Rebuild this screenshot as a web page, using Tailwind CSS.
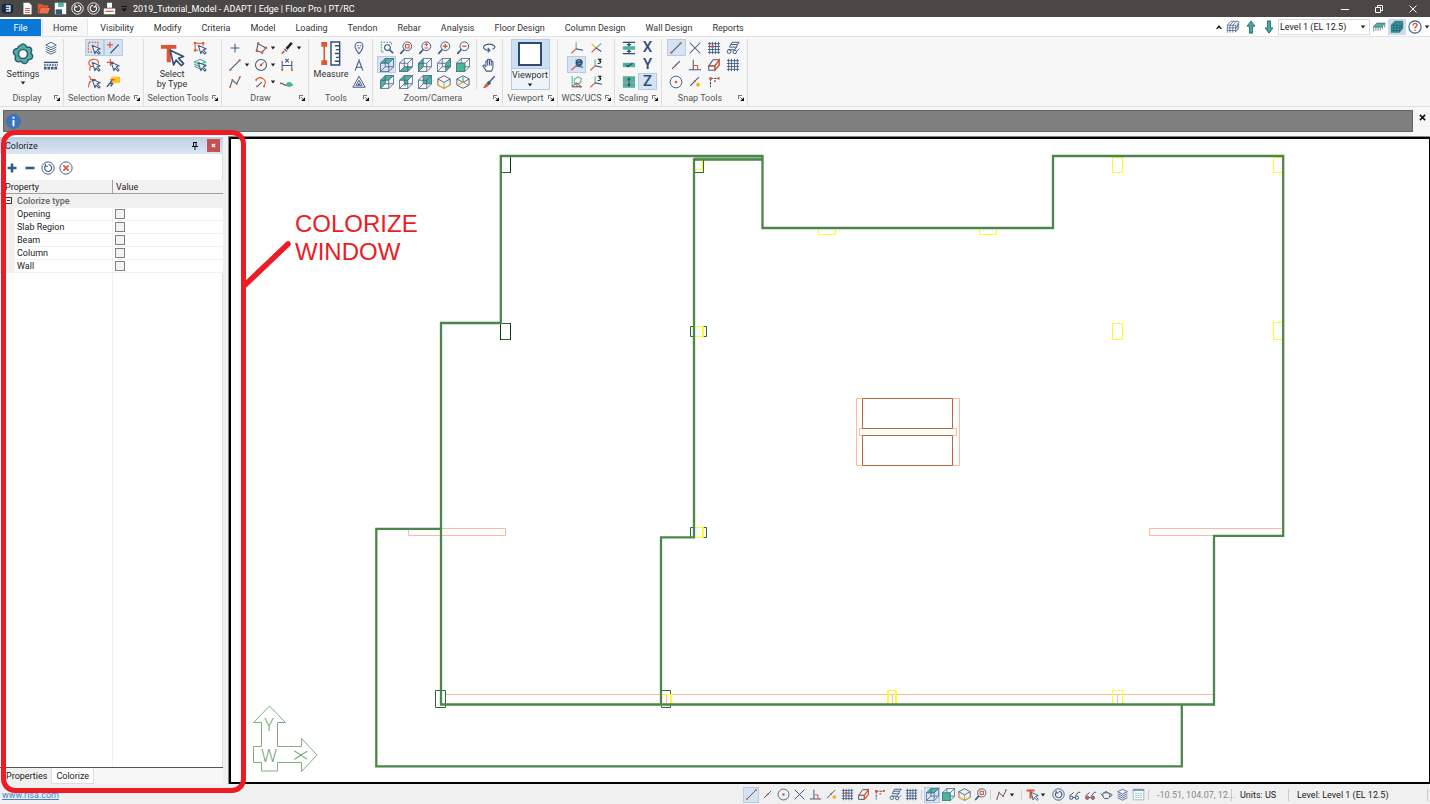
<!DOCTYPE html>
<html lang="en">
<head>
  <meta charset="UTF-8">
  <meta name="viewport" content="width=device-width, initial-scale=1.0">
  <title>2019_Tutorial_Model - ADAPT | Edge | Floor Pro | PT/RC</title>
  <script src="https://cdn.jsdelivr.net/npm/@tailwindcss/browser@4"></script>
</head>
<body class="flex h-screen flex-col overflow-hidden bg-[#f0f0f0] fill-none stroke-none font-[Roboto,'Noto_Sans',sans-serif] text-[9px] leading-3 text-[#333]">

  <!-- Icon set -->
  <svg class="hidden" aria-hidden="true">
    <symbol id="cube" viewBox="0 0 16 16"><path stroke="currentColor" stroke-width=".9" d="M.5 6H10v9.500H.5zM6 .5h9.500V10H6zM.5 6L6 .5M10 6l5.500-5.500M.5 15.500L6 10M10 15.500l5.500-5.500"/></symbol>
    <symbol id="cube-top" viewBox="0 0 16 16"><path fill="#4fb39c" d="M.5 6L6 .5h9.500L10 6z"/><use href="#cube"/></symbol>
    <symbol id="cube-bottom" viewBox="0 0 16 16"><path fill="#4fb39c" d="M.5 15.500L6 10h9.500L10 15.500z"/><use href="#cube"/></symbol>
    <symbol id="cube-left" viewBox="0 0 16 16"><path fill="#4fb39c" d="M.5 6L6 .5V10L.5 15.500z"/><use href="#cube"/></symbol>
    <symbol id="cube-right" viewBox="0 0 16 16"><path fill="#4fb39c" d="M10 6L15.500.5V10L10 15.500z"/><use href="#cube"/></symbol>
    <symbol id="cube-front" viewBox="0 0 16 16"><use href="#cube"/><path fill="#4fb39c" stroke="#2f7f78" stroke-width=".9" d="M.5 6H10v9.500H.5z"/></symbol>
    <symbol id="cube-tl" viewBox="0 0 16 16"><path fill="#4fb39c" d="M.5 6L6 .5h9.500L10 6H6v4L.5 15.500z"/><use href="#cube"/></symbol>
    <symbol id="cube-tr" viewBox="0 0 16 16"><path fill="#4fb39c" d="M.5 6L6 .5h9.500L10 6v4L6 13.500V6z"/><use href="#cube"/></symbol>
    <symbol id="cube-back" viewBox="0 0 16 16"><path fill="#4fb39c" d="M6 .5h9.500V10H6z"/><use href="#cube"/></symbol>
    <symbol id="iso" viewBox="0 0 16 16"><path stroke="currentColor" d="M8 .8l7 3.700v7L8 15.200 1 11.500v-7zM1 4.500l7 4 7-4"/><path stroke="#f0a93a" stroke-width="1.500" d="M1 7v4.500l7 3.700 7-3.700"/><path stroke="#4fb39c" d="M8 8.500v6.500"/></symbol>
    <symbol id="iso2" viewBox="0 0 16 16"><path stroke="currentColor" d="M8 .8l7 3.700v7L8 15.200 1 11.500v-7zM1 4.500l7 4 7-4"/><path stroke="#f0a93a" stroke-width="1.500" d="M8 8l-6 3.500"/><path stroke="#e0542f" d="M8 8l6 3.500"/><path stroke="#4fb39c" stroke-width="1.500" d="M8 2v6"/></symbol>

    <symbol id="cursor" viewBox="0 0 16 16"><path fill="#f7f7f7" stroke="currentColor" stroke-width="1.200" stroke-linejoin="round" d="M6 5l9 3.800-3.300 1.300 3.300 3.600-1.400 1.300-3.300-3.500L9 14.500z"/></symbol>
    <symbol id="gear" viewBox="0 0 24 24"><path fill="#4fb39c" stroke="#2f5c80" stroke-width="1.500" stroke-linejoin="round" d="M9.200 3.500Q12 .4 14.800 3.500L15.500 5.200 17.300 4.900Q21.300 5.200 20.500 9.200L19.800 11 21.100 12.400Q22.800 16.200 19 17.500L17.200 17.800 16.700 19.600Q14.300 23 11.200 20.600L10 19.200 8.100 19.700Q3.900 19.800 4.200 15.700L4.800 13.800 3.300 12.500Q1 9 4.500 6.900L6.500 6.500 7.400 4.700z"/><circle cx="12" cy="12" r="4.500" fill="#fff" stroke="#2f5c80" stroke-width="1.600"/></symbol>
    <symbol id="layers" viewBox="0 0 16 16"><path stroke="currentColor" d="M8 1.500l6 3-6 3-6-3zM2 7l6 3 6-3M2 9.500l6 3 6-3M2 12l6 3 6-3"/></symbol>
    <symbol id="linetype" viewBox="0 0 16 16"><path stroke="currentColor" stroke-width="1.600" d="M0 5h16"/><path stroke="currentColor" stroke-width="1.500" stroke-dasharray="2 1" d="M0 8h16"/><path stroke="currentColor" stroke-width="3" stroke-dasharray="3 1" d="M0 11.500h16"/></symbol>
    <symbol id="sel-box" viewBox="0 0 16 16"><path stroke="#e0542f" stroke-width="1.200" stroke-dasharray="2 1.200" d="M12.500 6V1.500h-11v11H6"/><use href="#cursor"/></symbol>
    <symbol id="sel-add" viewBox="0 0 16 16"><path stroke="#e0542f" stroke-width="1.300" d="M4.500 1v7M1 4.500h7"/><path stroke="currentColor" stroke-width="1.300" d="M5 14L14.500 4"/></symbol>
    <symbol id="sel-lasso" viewBox="0 0 16 16"><path stroke="#e0542f" stroke-width="1.300" d="M7 10C0 9 1 2 7 1.500S14 5 12.500 6.500M4 9.500c-2 2 0 4-1 5"/><use href="#cursor"/></symbol>
    <symbol id="sel-plus" viewBox="0 0 16 16"><path stroke="#e0542f" stroke-width="1.300" d="M5 1v8M1 5h8"/><use href="#cursor"/></symbol>
    <symbol id="sel-chain" viewBox="0 0 16 16"><path stroke="#e0542f" stroke-width="1.300" d="M2 1.500c4 1 0 3 3 4s3-2 5 0M5 7c-4 1-2 4-3.500 7"/><use href="#cursor"/></symbol>
    <symbol id="sel-flag" viewBox="0 0 16 16"><path fill="#ffc21f" d="M6 2h10v7H5.500z"/><path stroke="#e0542f" stroke-width="1.600" d="M5 5.500h5"/><path stroke="currentColor" stroke-width="1.600" d="M6.500 6.500l-2 3-3.500 4M4.500 9.500l3 .5-2 3"/></symbol>
    <symbol id="sel-type" viewBox="0 0 26 26"><path fill="#e0542f" d="M1 3h16v4h-5.800v14H7V7H1z"/><path fill="#f7f7f7" stroke="#2f4f78" stroke-width="1.700" stroke-linejoin="round" d="M10.500 8.500l14 6.500-5.300 1.800 5.300 5.700-2.300 2.200-5.400-5.800-2.600 5z"/></symbol>
    <symbol id="sel-rect" viewBox="0 0 16 16"><path stroke="#e0542f" stroke-width="1.200" d="M11.500 6V2.500h-9v8H6"/><path fill="#e0542f" d="M1 1h2.500v2.500H1zM10.500 1H13v2.500h-2.500zM1 9.500h2.500V12H1z"/><use href="#cursor"/></symbol>
    <symbol id="sel-layer" viewBox="0 0 16 16"><path stroke="#4fb39c" stroke-width="1.300" d="M8 1.500l6.500 3-6.500 3-6.500-3zM1.500 7L8 10l6.500-3M1.500 9.500l6.500 3"/><use href="#cursor"/></symbol>

    <symbol id="plus" viewBox="0 0 16 16"><path stroke="currentColor" stroke-width="1.200" d="M8 3v10M3 8h10"/></symbol>
    <symbol id="polygon" viewBox="0 0 16 16"><path stroke="currentColor" stroke-width="1.200" d="M4.500 3l9 5-4.500 5-6-2z"/><path fill="#e0542f" d="M3.500 1.500H6V4H3.500zM12.500 6.500H15V9h-2.500zM8 12h2.500v2.500H8zM2 10h2.500v2.500H2z"/></symbol>
    <symbol id="brush" viewBox="0 0 16 16"><path stroke="#222" stroke-width="3" d="M7.500 9l6-7"/><path stroke="#e0542f" stroke-width="2" d="M2 14.500l3-3"/><path stroke="currentColor" stroke-width="1.500" d="M5 9l3 3"/></symbol>
    <symbol id="line" viewBox="0 0 16 16"><path stroke="currentColor" stroke-width="1.200" d="M3 13L13 3"/><path fill="#e0542f" d="M1.500 12.200h2.300v2.300H1.500zM12.200 1.500h2.300v2.300h-2.300z"/></symbol>
    <symbol id="segment" viewBox="0 0 16 16"><path stroke="currentColor" stroke-width="1.200" d="M3.500 12.500l9-9"/><path stroke="#e0542f" stroke-width="1.700" d="M7 9l2-2"/></symbol>
    <symbol id="circle" viewBox="0 0 16 16"><circle cx="8" cy="8" r="6.300" stroke="currentColor" stroke-width="1.200"/><path stroke="#e0542f" stroke-width="1.200" d="M8 8l3-3"/><circle cx="8" cy="8" r="1.400" fill="#e0542f"/></symbol>
    <symbol id="dim" viewBox="0 0 16 16"><path stroke="currentColor" stroke-width="1.200" d="M2.500 3v11M13.500 3v11M3 8.500h10M6 1l4 4M10 1L6 5"/><path fill="#e0542f" d="M1.500 12.500h2v2h-2zM12.500 12.500h2v2h-2z"/></symbol>
    <symbol id="polyline" viewBox="0 0 16 16"><path stroke="currentColor" stroke-width="1.200" d="M2.500 13L5 6l5 4 3.500-7"/><path fill="#e0542f" d="M1.500 12.500h2v2h-2zM4 4.500h2v2H4zM9 9h2v2H9zM12.500 1.500h2v2h-2z"/></symbol>
    <symbol id="arc" viewBox="0 0 16 16"><path stroke="#e0542f" stroke-width="1.200" d="M2.500 5.500C7 0 16 5 11.500 13"/><path stroke="currentColor" stroke-width="1.200" d="M4 13l5-5"/><path fill="#e0542f" d="M1.500 4.500h2v2h-2zM10.500 12h2v2h-2zM2.500 12h2v2h-2z"/></symbol>
    <symbol id="support" viewBox="0 0 16 16"><path stroke="currentColor" stroke-width="1.200" d="M1 9.500c3 0 3 2.500 7 2.500s3-.5 7-.5"/><path fill="#4fb39c" d="M7 11.500a3.500 3.500 0 0 1 7 0c-1 3-6 3-7 0z"/><path fill="#e0542f" d="M0 8.500h2v2H0z"/></symbol>

    <symbol id="measure" viewBox="0 0 24 28"><path stroke="#e0542f" stroke-width="1.600" d="M5 4v20"/><path fill="#e0542f" d="M2 2h6v5H2zM2 21h6v5H2z"/><path fill="#fff" stroke="#2f4f78" stroke-width="1.500" d="M12 2h9v24h-9zM21 6h-5M21 10h-4M21 14h-5M21 18h-4M21 22h-5"/></symbol>
    <symbol id="pin" viewBox="0 0 16 16"><path stroke="currentColor" stroke-width="1.200" d="M8 14.500C5 11 3.500 8.500 3.500 6a4.500 4.500 0 0 1 9 0c0 2.500-1.500 5-4.500 8.500zM6 5.500h1.500M9 5.500h1.500M6.500 8h3"/></symbol>
    <symbol id="compass" viewBox="0 0 16 16"><path stroke="currentColor" stroke-width="1.200" d="M8 1v3M7.500 4L3.500 14.500M8.500 4l4 10.500M4.500 10.500h7"/></symbol>
    <symbol id="tri" viewBox="0 0 16 16"><path stroke="currentColor" stroke-width="1.100" d="M8 1.500L15 14H1zM8 6l3.500 6.200h-7z"/><path fill="currentColor" d="M8 8.500l1.500 3h-3z"/></symbol>

    <symbol id="zoom-win" viewBox="0 0 16 16"><path stroke="#3f9c86" stroke-width="1.200" stroke-dasharray="2 1.200" d="M13 4V1.500H1.500v11H5"/><circle cx="8.500" cy="7.500" r="3.300" fill="#f7f7f7" stroke="currentColor" stroke-width="1.200"/><path stroke="currentColor" stroke-width="2" d="M11 10l4 4"/></symbol>
    <symbol id="lens" viewBox="0 0 16 16"><circle cx="9.500" cy="6" r="5" stroke="currentColor" stroke-width="1.100"/><path stroke="currentColor" stroke-width="2" d="M6 9.700l-4.500 5"/></symbol>
    <symbol id="zoom-ext" viewBox="0 0 16 16"><use href="#lens"/><path stroke="#e0542f" stroke-width="1.300" d="M7.500 4h4v4h-4z"/></symbol>
    <symbol id="zoom-sel" viewBox="0 0 16 16"><use href="#lens"/><path stroke="#e0542f" stroke-width="1.300" d="M9.500 2v4M7.500 4h4M7.500 8h4"/></symbol>
    <symbol id="zoom-in" viewBox="0 0 16 16"><use href="#lens"/><path stroke="#e0542f" stroke-width="1.500" d="M9.500 3.500v5M7 6h5"/></symbol>
    <symbol id="zoom-out" viewBox="0 0 16 16"><use href="#lens"/><path stroke="#e0542f" stroke-width="1.500" d="M7 6h5"/></symbol>
    <symbol id="orbit" viewBox="0 0 16 16"><path stroke="currentColor" stroke-width="1.300" d="M12 9.500C18 7 13 3.500 8 3.500S-2 8 6 10.500h3M6.500 8L9 10.500 6.500 13"/></symbol>
    <symbol id="hand" viewBox="0 0 16 16"><path fill="#fff" stroke="currentColor" stroke-width="1.200" stroke-linejoin="round" d="M5 15l-4-6 1.500-1L4.500 10V3.500h2V8 1.500h2V8 2h2v6.500V4h2V11l-1.500 4z"/></symbol>
    <symbol id="paint" viewBox="0 0 16 16"><path stroke="currentColor" stroke-width="1.600" d="M14.500 1.500L8 8.500"/><path fill="currentColor" d="M7.500 6.500l3 3-3 2.500-2.500-2.500z"/><path fill="#e0542f" d="M5 9.500L7.500 12C5.500 14.500 3 15 1 15c2-2 2-4 4-5.500z"/></symbol>

    <symbol id="ucs" viewBox="0 0 16 16"><path stroke="#4fb39c" stroke-width="1.200" d="M7 9V1.500"/><path stroke="#e0542f" stroke-width="1.200" d="M7 9l-5.500 5"/><path stroke="currentColor" stroke-width="1.200" d="M7 9l8 1.500"/></symbol>
    <symbol id="ucs-x" viewBox="0 0 16 16"><path stroke="#e8b52f" stroke-width="1.300" d="M3 3l5 5"/><path stroke="#4fb39c" stroke-width="1.300" d="M14 3L8 8"/><path stroke="currentColor" stroke-width="1.200" d="M8 8l6 4"/><path stroke="#e0542f" stroke-width="1.300" d="M8 8l-5 5"/></symbol>
    <symbol id="ucs-globe" viewBox="0 0 16 16"><use href="#ucs"/><circle cx="10.500" cy="5" r="4" fill="#2f4f78"/><path stroke="#bcd" d="M8.500 4c1-2 2 0 3-1M9 7c1-1 2 0 3-1"/></symbol>
    <symbol id="ucs-3" viewBox="0 0 16 16"><use href="#ucs"/><path stroke="#111" stroke-width="1.200" d="M10 1.500h3.500L12 3.500c2.500 0 2 3-2 2.700"/></symbol>
    <symbol id="ucs-free" viewBox="0 0 16 16"><path stroke="#4fb39c" stroke-width="1.200" d="M2.500 13V1M5 9V5l4-3 4 2-1 5-4 1zM5 9l4 4"/><path stroke="#e0542f" stroke-width="1.200" d="M2.500 13l5-4 6 5"/><path stroke="currentColor" stroke-width="1.200" d="M2 13.500h11"/></symbol>

    <symbol id="sc-1" viewBox="0 0 16 16"><path stroke="currentColor" stroke-width="1.500" d="M1 1.500h14M1 14.500h14M8 2v12"/><path fill="#4fb39c" d="M1 6h14v4H1z"/><path fill="currentColor" d="M8 6L5 3.500h6zM8 10l3 2.500H5z"/></symbol>
    <symbol id="sc-2" viewBox="0 0 16 16"><path fill="#4fb39c" d="M1 5.500h14v5H1z"/><path stroke="#2f4f78" stroke-width="1.500" d="M5 8l2 1.800 5-4"/></symbol>
    <symbol id="sc-3" viewBox="0 0 16 16"><path fill="#4fb39c" d="M1 1.500h14v5.500H1zM1 9h14v5.500H1z"/><path stroke="#2f4f78" stroke-width="1.200" d="M1 8h14M8 3v10M6.500 5L8 3.500 9.500 5M6.500 11L8 12.500 9.500 11"/></symbol>

    <symbol id="cross" viewBox="0 0 16 16"><path stroke="currentColor" stroke-width="1.200" d="M2 2l12 12M14 2L2 14"/></symbol>
    <symbol id="grid" viewBox="0 0 16 16"><path stroke="currentColor" d="M3 1v14M6.300 1v14M9.700 1v14M13 1v14M1 3h14M1 6.300h14M1 9.700h14M1 13h14"/></symbol>
    <symbol id="grid-snap" viewBox="0 0 16 16"><use href="#grid"/><path fill="#e0542f" d="M5 5h2.800v2.800H5z"/></symbol>
    <symbol id="hatch" viewBox="0 0 16 16"><path stroke="currentColor" stroke-width="1.100" d="M7 1.500h8l-2 2.500H5.500zM5.500 4L4 7h8l1-3M12 7l-2 3H3"/><circle cx="3.500" cy="12" r="2.200" stroke="currentColor" stroke-width="1.100"/><circle cx="10" cy="12.500" r="2" stroke="currentColor" stroke-width="1.100"/><path stroke="currentColor" d="M12 12l3-3"/></symbol>
    <symbol id="perp" viewBox="0 0 16 16"><path stroke="currentColor" stroke-width="1.200" d="M1 13.500h14M6 2v11.500"/><path stroke="#e0542f" stroke-width="1.200" d="M6.500 8.500h4.500v5"/></symbol>
    <symbol id="snap-face" viewBox="0 0 16 16"><path stroke="currentColor" stroke-width="1.200" d="M2 9l5-7h7l-5 7zM2 9v5h7V9M9 14l5-6V2"/><path stroke="#e0542f" stroke-width="1.300" d="M9 14V9l5-7v6zM2 9h7"/></symbol>
    <symbol id="target" viewBox="0 0 16 16"><circle cx="8" cy="8" r="6.700" stroke="currentColor" stroke-width="1.100"/><circle cx="8" cy="8" r="1.500" fill="#e0542f"/></symbol>
    <symbol id="near" viewBox="0 0 16 16"><path stroke="currentColor" stroke-width="1.200" d="M2.500 12.500l10-10"/><path fill="#e0542f" d="M6 7l2.500-1.500v3z"/><path stroke="#f5b11f" stroke-width="2" d="M11.500 8.500v5M9 11h5"/></symbol>
    <symbol id="ortho" viewBox="0 0 16 16"><path stroke="currentColor" stroke-width="1.200" stroke-dasharray="3 1" d="M4 4h9M4 4v10"/><path fill="#e0542f" d="M2.500 2.500h3v3h-3zM12 2.500h2.500v2.500H12zM8 6h2v2H8z"/></symbol>

    <symbol id="building" viewBox="0 0 16 16"><path stroke="currentColor" stroke-width=".8" d="M1.500 6l4-4.500h9v8L11 13.500M1.500 6v8.500M1.500 6H11v8M4.500 6v8.500M7.800 6v8.500M1.500 9H11l3.500-4M1.500 12H11M4.500 6l4-4.500M7.800 6l4-4.500M12.800 3.500v8"/></symbol>
    <symbol id="building-on" viewBox="0 0 16 16"><path fill="#2fa190" d="M1.500 6l4-4.500h9v8L11 14.500H1.500z"/><use href="#building"/></symbol>
    <symbol id="slab" viewBox="0 0 16 16"><path fill="#4fb39c" stroke="#2f6f78" stroke-width=".8" d="M1.500 8l4-4.500H15L11 8z"/><path stroke="currentColor" stroke-width=".8" d="M2 8v5M4.500 8v4M7 8v4M9.500 8v4M12 7v3M14.500 4.500v4"/></symbol>
    <symbol id="up" viewBox="0 0 16 16"><path fill="#3fae93" stroke="#2f5c80" stroke-linejoin="round" d="M8 1l4.500 6H9.800v8H6.200V7H3.500z"/></symbol>
    <symbol id="down" viewBox="0 0 16 16"><path fill="#3fae93" stroke="#2f5c80" stroke-linejoin="round" d="M8 15L3.500 9h2.700V1h3.600v8h2.700z"/></symbol>
    <symbol id="help" viewBox="0 0 16 16"><circle cx="8" cy="8" r="7" fill="#fff" stroke="currentColor" stroke-width="1.200"/><path stroke="#e0542f" stroke-width="1.600" d="M5.700 6.200C5.800 3 10.500 3.300 10.300 6 10.200 7.700 8 7.600 8 9.700M8 11v1.700"/></symbol>
    <symbol id="rotate" viewBox="0 0 16 16"><circle cx="8" cy="8" r="7" stroke="currentColor" stroke-width="1.100"/><path stroke="currentColor" stroke-width="1.300" d="M5 5.500A4 4 0 1 0 8.500 4M5 3v3h3"/></symbol>
    <symbol id="glasses" viewBox="0 0 16 16"><path stroke="currentColor" stroke-width="1.200" d="M1.500 10L7 5.500M9 10l4-5 2 .5M6 11.500h3"/><circle cx="4" cy="12" r="2" stroke="currentColor" stroke-width="1.200"/><circle cx="11" cy="12" r="2" stroke="currentColor" stroke-width="1.200"/></symbol>
    <symbol id="glasses-on" viewBox="0 0 16 16"><use href="#glasses"/><circle cx="4" cy="12" r="1.700" fill="#e0542f"/><circle cx="11" cy="12" r="1.700" fill="#e0542f"/></symbol>
    <symbol id="teapot" viewBox="0 0 16 16"><path stroke="currentColor" stroke-width="1.200" d="M4 6h7c2 2 1.500 5-1 7H5.500C3 11 3 8 4 6zM6 6c0-2.500 3-2.500 3 0M4 10L.8 7M11.500 7.500c4-1.500 4 3 .5 3"/></symbol>
    <symbol id="sheet" viewBox="0 0 16 16"><path fill="#fff" stroke="#8fa6c4" d="M1.500 1.500h13v13h-13z"/><path stroke="#6f8cb2" stroke-width="2" d="M1 2.500h14"/><path stroke="#4fb39c" stroke-dasharray="2 1" d="M4 6.500h8M4 9h8M4 11.500h8"/></symbol>

    <symbol id="launch" viewBox="0 0 8 8"><path stroke="#333" d="M.5 5.500V.5h5M3 3l3 3"/><path fill="#111" d="M8 3v5H3z"/></symbol>
    <symbol id="caret" viewBox="0 0 6 4"><path fill="#222" d="M.8.5h4.400L3 3.500z"/></symbol>
  </svg>

  <!-- Title bar -->
  <header class="flex h-[17px] shrink-0 items-center bg-[#4a4846] text-white">
    <div class="flex items-center gap-[3px] pl-px [&_svg]:size-[13px] [&>button]:grid">
      <svg viewBox="0 0 16 16" role="img" aria-label="ADAPT"><rect x="1" y="2" width="14" height="12" rx="4" fill="#15294d"/><path stroke="#dfe8f5" stroke-width="1.800" d="M6 5h5v6H6M6 8h5"/></svg>
      <button aria-label="New" class="ml-1"><svg viewBox="0 0 16 16"><path fill="#fff" d="M3 1h7l3 3v11H3z"/><path stroke="#e0542f" stroke-width="1.200" d="M5 8h6M5 10.500h6M5 13h6"/></svg></button>
      <button aria-label="Open"><svg viewBox="0 0 16 16"><path fill="#e0542f" d="M1 2h5l1.500 2H14v3H4l-2 7H1z"/><path fill="#f0704a" d="M4.500 7.500H16L13.500 14H2.500z"/></svg></button>
      <button aria-label="Save" class="ml-px"><svg viewBox="0 0 16 16"><path fill="#fff" d="M1 1h14v14H1z"/><path fill="#2f5c80" d="M2 9h8v6H2z"/><path fill="#4fb39c" d="M5 1h7v5H5z"/></svg></button>
      <button aria-label="Undo" class="ml-px"><svg><use href="#rotate"/></svg></button>
      <button aria-label="Redo" class="-scale-x-100"><svg><use href="#rotate"/></svg></button>
      <button aria-label="Print"><svg viewBox="0 0 16 16"><path fill="#fff" d="M5 1h6v6H5zM1 8h14v7H1z"/><path stroke="#e0542f" stroke-width="1.500" d="M3 11.500h10"/></svg></button>
      <button aria-label="Customize"><svg viewBox="0 0 16 16"><path fill="#111" d="M3 8h7l-3.500 4z"/><path stroke="#111" stroke-width="1.300" d="M3 5.500h7"/></svg></button>
    </div>
    <h1 class="flex-1 pl-px">2019_Tutorial_Model - ADAPT | Edge | Floor Pro | PT/RC</h1>
    <div class="flex items-center gap-6 pr-3 [&_svg]:size-[10px] [&_svg]:stroke-white">
      <button aria-label="Minimize"><svg viewBox="0 0 10 10"><path d="M1 5.500h8"/></svg></button>
      <button aria-label="Restore"><svg viewBox="0 0 10 10"><path d="M1.500 3.500h5v5h-5zM3.500 3.500v-2h5v5h-2"/></svg></button>
      <button aria-label="Close"><svg viewBox="0 0 10 10"><path d="M1.500 1.500l7 7M8.500 1.500l-7 7"/></svg></button>
    </div>
  </header>

  <!-- Ribbon tabs -->
  <nav class="flex h-[19px] shrink-0 items-stretch bg-white pt-[2px] text-[#35557d]">
    <div class="flex flex-1 [&>a]:px-[10px] [&>a]:pt-[3px] [&>a]:text-[#333]">
      <button class="mr-px w-[41px] bg-[#0a78d6] text-white">File</button>
      <a href="#" class="mr-[2px] border-x border-[#e3e3e3] bg-[#f7f7f7]">Home</a>
      <a href="#">Visibility</a>
      <a href="#">Modify</a>
      <a href="#">Criteria</a>
      <a href="#">Model</a>
      <a href="#">Loading</a>
      <a href="#">Tendon</a>
      <a href="#">Rebar</a>
      <a href="#">Analysis</a>
      <a href="#">Floor Design</a>
      <a href="#">Column Design</a>
      <a href="#">Wall Design</a>
      <a href="#">Reports</a>
    </div>
    <div class="-mt-px flex h-[17px] items-center [&>button]:grid [&>button]:h-4 [&>button]:w-[18px] [&>button]:place-items-center [&>button_svg]:size-[14px]">
      <button aria-label="Collapse ribbon" class="-mr-1"><svg viewBox="0 0 14 14"><path fill="#111" d="M4 9l3-4 3 4H8.500L7 7.500 5.500 9z"/></svg></button>
      <button aria-label="Stories"><svg><use href="#building"/></svg></button>
      <button aria-label="Level up"><svg><use href="#up"/></svg></button>
      <button aria-label="Level down"><svg><use href="#down"/></svg></button>
      <div class="relative flex h-4 w-[92px] items-center border border-[#dcdcdc] bg-white">
        <select aria-label="Active level" class="w-full appearance-none pl-px text-[9px] leading-3 text-[#222]"><option>Level 1 (EL 12.5)</option></select>
        <svg class="pointer-events-none absolute right-[3px] h-1 w-[6px]"><use href="#caret"/></svg>
      </div>
      <button aria-label="Single level"><svg><use href="#slab"/></svg></button>
      <button aria-label="Multi level" class="bg-[#c9dbf0]"><svg><use href="#building-on"/></svg></button>
      <button aria-label="Help"><svg><use href="#help"/></svg></button>
      <svg class="h-1 w-[6px]"><use href="#caret"/></svg>
    </div>
  </nav>

  <!-- Ribbon -->
  <div class="flex h-[71px] shrink-0 border-y border-[#e2e2e2] bg-[#f7f7f7] pt-[2px] text-[#3c5a82] [&>section]:flex [&>section]:shrink-0 [&>section]:flex-col [&>section]:border-r [&>section]:border-[#dedede] [&>section>div]:h-[51px] [&>section>div]:flex [&>section>footer]:flex [&>section>footer]:h-4 [&>section>footer]:items-center [&>section>footer]:text-[#555] [&_footer>span]:flex-1 [&_footer>span]:text-center [&_footer_svg]:mr-[3px] [&_footer_svg]:size-[6px] [&_.tool]:grid [&_.tool]:h-[17px] [&_.tool]:w-[19px] [&_.tool]:place-items-center [&_.tool>svg]:size-[14px]">
    <section class="w-[64px]">
      <div class="pl-[5px]">
        <button class="flex w-9 flex-col items-center text-[#333]"><svg class="mt-[3px] mb-[2px] size-6"><use href="#gear"/></svg>Settings<svg class="mt-px h-1 w-[6px]"><use href="#caret"/></svg></button>
        <div>
          <button class="tool" aria-label="Layers"><svg><use href="#layers"/></svg></button>
          <button class="tool" aria-label="Line types"><svg><use href="#linetype"/></svg></button>
        </div>
      </div>
      <footer><span>Display</span><button aria-label="Display settings"><svg><use href="#launch"/></svg></button></footer>
    </section>

    <section class="w-[80px]">
      <div class="justify-center">
        <div class="grid grid-cols-2">
          <button class="tool bg-[#d5e3f3] outline -outline-offset-1 outline-[#b5cbe6]" aria-label="Window select"><svg><use href="#sel-box"/></svg></button>
          <button class="tool bg-[#d5e3f3] outline -outline-offset-1 outline-[#b5cbe6]" aria-label="Add to selection"><svg><use href="#sel-add"/></svg></button>
          <button class="tool" aria-label="Lasso select"><svg><use href="#sel-lasso"/></svg></button>
          <button class="tool" aria-label="Point select"><svg><use href="#sel-plus"/></svg></button>
          <button class="tool" aria-label="Fence select"><svg><use href="#sel-chain"/></svg></button>
          <button class="tool" aria-label="Pick by flag"><svg><use href="#sel-flag"/></svg></button>
        </div>
      </div>
      <footer><span>Selection Mode</span><button aria-label="Selection mode settings"><svg><use href="#launch"/></svg></button></footer>
    </section>

    <section class="w-[78px]">
      <div class="justify-center pr-[2px]">
        <button class="flex w-9 flex-col items-center leading-[10px] text-[#333]"><svg class="mt-[3px] mb-[2px] size-[25px]"><use href="#sel-type"/></svg><span>Select<br>by Type</span></button>
        <div>
          <button class="tool" aria-label="Select similar"><svg><use href="#sel-rect"/></svg></button>
          <button class="tool" aria-label="Select by layer"><svg><use href="#sel-layer"/></svg></button>
        </div>
      </div>
      <footer><span class="whitespace-nowrap">Selection Tools</span><button aria-label="Selection tools settings"><svg><use href="#launch"/></svg></button></footer>
    </section>

    <section class="w-[87px]">
      <div class="pl-[3px]">
        <div class="grid grid-cols-3 [&>span]:flex [&>span]:w-[26px] [&>span]:items-center [&>span>svg]:h-1 [&>span>svg]:w-[6px]">
          <span><button class="tool" aria-label="Point"><svg><use href="#plus"/></svg></button></span>
          <span><button class="tool" aria-label="Polygon"><svg><use href="#polygon"/></svg></button><svg><use href="#caret"/></svg></span>
          <span><button class="tool" aria-label="Match"><svg><use href="#brush"/></svg></button><svg><use href="#caret"/></svg></span>
          <span><button class="tool" aria-label="Line"><svg><use href="#line"/></svg></button><svg><use href="#caret"/></svg></span>
          <span><button class="tool" aria-label="Circle"><svg><use href="#circle"/></svg></button><svg><use href="#caret"/></svg></span>
          <span><button class="tool" aria-label="Dimension"><svg><use href="#dim"/></svg></button></span>
          <span><button class="tool" aria-label="Polyline"><svg><use href="#polyline"/></svg></button></span>
          <span><button class="tool" aria-label="Arc"><svg><use href="#arc"/></svg></button><svg><use href="#caret"/></svg></span>
          <span><button class="tool" aria-label="Spline"><svg><use href="#support"/></svg></button></span>
        </div>
      </div>
      <footer><span>Draw</span><button aria-label="Draw settings"><svg><use href="#launch"/></svg></button></footer>
    </section>

    <section class="w-[64px]">
      <div class="pl-1">
        <button class="flex w-9 flex-col items-center text-[#333]"><svg class="mt-px mb-px h-[27px] w-6"><use href="#measure"/></svg>Measure</button>
        <div>
          <button class="tool" aria-label="Location"><svg><use href="#pin"/></svg></button>
          <button class="tool" aria-label="Angle"><svg><use href="#compass"/></svg></button>
          <button class="tool" aria-label="Area"><svg><use href="#tri"/></svg></button>
        </div>
      </div>
      <footer><span>Tools</span><button aria-label="Tools settings"><svg><use href="#launch"/></svg></button></footer>
    </section>

    <section class="w-[130px]">
      <div class="pl-1">
        <div class="grid grid-cols-5">
          <button class="tool" aria-label="Zoom window"><svg><use href="#zoom-win"/></svg></button>
          <button class="tool" aria-label="Zoom extents"><svg><use href="#zoom-ext"/></svg></button>
          <button class="tool" aria-label="Dynamic zoom"><svg><use href="#zoom-sel"/></svg></button>
          <button class="tool" aria-label="Zoom in"><svg><use href="#zoom-in"/></svg></button>
          <button class="tool" aria-label="Zoom out"><svg><use href="#zoom-out"/></svg></button>
          <button class="tool bg-[#d5e3f3] outline -outline-offset-1 outline-[#b5cbe6]" aria-label="Top view"><svg><use href="#cube-top"/></svg></button>
          <button class="tool" aria-label="Bottom view"><svg><use href="#cube-bottom"/></svg></button>
          <button class="tool" aria-label="Left view"><svg><use href="#cube-left"/></svg></button>
          <button class="tool" aria-label="Right view"><svg><use href="#cube-right"/></svg></button>
          <button class="tool" aria-label="Front view"><svg><use href="#cube-front"/></svg></button>
          <button class="tool" aria-label="Top left view"><svg><use href="#cube-tl"/></svg></button>
          <button class="tool" aria-label="Top right view"><svg><use href="#cube-tr"/></svg></button>
          <button class="tool" aria-label="Back view"><svg><use href="#cube-back"/></svg></button>
          <button class="tool" aria-label="Isometric view"><svg><use href="#iso"/></svg></button>
          <button class="tool" aria-label="Axes view"><svg><use href="#iso2"/></svg></button>
        </div>
        <div class="ml-1 border-l border-[#dedede] pl-[2px]">
          <button class="tool" aria-label="Orbit"><svg><use href="#orbit"/></svg></button>
          <button class="tool" aria-label="Pan"><svg><use href="#hand"/></svg></button>
          <button class="tool" aria-label="Redraw"><svg><use href="#paint"/></svg></button>
        </div>
      </div>
      <footer><span>Zoom/Camera</span><button aria-label="Camera settings"><svg><use href="#launch"/></svg></button></footer>
    </section>

    <section class="w-[55px]">
      <div class="justify-center">
        <button class="flex w-[39px] flex-col items-center border border-[#b5cbe6] bg-[#eef3fa] text-[#333]"><span class="grid h-[29px] w-full place-items-center border-b border-[#b5cbe6] bg-[#cfdff2]"><span class="size-6 border-2 border-[#2f4a73] bg-white"></span></span>Viewport<svg class="mt-[2px] h-1 w-[6px]"><use href="#caret"/></svg></button>
      </div>
      <footer><span>Viewport</span><button aria-label="Viewport settings"><svg><use href="#launch"/></svg></button></footer>
    </section>

    <section class="w-[57px]">
      <div class="justify-center">
        <div class="grid grid-cols-2">
          <button class="tool" aria-label="WCS"><svg><use href="#ucs"/></svg></button>
          <button class="tool" aria-label="Rotate UCS"><svg><use href="#ucs-x"/></svg></button>
          <button class="tool bg-[#d5e3f3] outline -outline-offset-1 outline-[#b5cbe6]" aria-label="World UCS"><svg><use href="#ucs-globe"/></svg></button>
          <button class="tool" aria-label="Save UCS"><svg><use href="#ucs-3"/></svg></button>
          <button class="tool" aria-label="Face UCS"><svg><use href="#ucs-free"/></svg></button>
          <button class="tool" aria-label="Three point UCS"><svg><use href="#ucs-3"/></svg></button>
        </div>
      </div>
      <footer><span>WCS/UCS</span><button aria-label="UCS settings"><svg><use href="#launch"/></svg></button></footer>
    </section>

    <section class="w-[47px]">
      <div class="justify-center">
        <div class="grid grid-cols-2 text-[15px] leading-[17px] font-medium text-[#2f4f78]">
          <button class="tool" aria-label="Scale up"><svg><use href="#sc-1"/></svg></button>
          <button class="tool">X</button>
          <button class="tool" aria-label="Reset scale"><svg><use href="#sc-2"/></svg></button>
          <button class="tool">Y</button>
          <button class="tool" aria-label="Scale down"><svg><use href="#sc-3"/></svg></button>
          <button class="tool bg-[#d5e3f3] outline -outline-offset-1 outline-[#b5cbe6]">Z</button>
        </div>
      </div>
      <footer><span>Scaling</span><button aria-label="Scaling settings"><svg><use href="#launch"/></svg></button></footer>
    </section>

    <section class="w-[86px]">
      <div class="justify-center">
        <div class="grid grid-cols-4">
          <button class="tool bg-[#d5e3f3] outline -outline-offset-1 outline-[#b5cbe6]" aria-label="Snap to end point"><svg><use href="#line"/></svg></button>
          <button class="tool" aria-label="Snap to intersection"><svg><use href="#cross"/></svg></button>
          <button class="tool" aria-label="Snap to grid"><svg><use href="#grid-snap"/></svg></button>
          <button class="tool" aria-label="Snap to hatch"><svg><use href="#hatch"/></svg></button>
          <button class="tool" aria-label="Snap to mid point"><svg><use href="#segment"/></svg></button>
          <button class="tool" aria-label="Snap perpendicular"><svg><use href="#perp"/></svg></button>
          <button class="tool" aria-label="Snap to face"><svg><use href="#snap-face"/></svg></button>
          <button class="tool" aria-label="Show grid"><svg><use href="#grid"/></svg></button>
          <button class="tool" aria-label="Snap to center"><svg><use href="#target"/></svg></button>
          <button class="tool" aria-label="Snap to nearest"><svg><use href="#near"/></svg></button>
          <button class="tool" aria-label="Ortho"><svg><use href="#ortho"/></svg></button>
        </div>
      </div>
      <footer><span>Snap Tools</span><button aria-label="Snap settings"><svg><use href="#launch"/></svg></button></footer>
    </section>
  </div>

  <!-- Message bar -->
  <div class="flex h-[29px] shrink-0 items-start bg-[#f7f7f7] pt-[3px] pl-[3px]">
    <div class="flex h-[22px] flex-1 items-center border border-[#666] bg-[#7f7f7f] pl-[2px]">
      <svg class="size-[15px]" viewBox="0 0 16 16" role="img" aria-label="Information"><circle cx="8" cy="8" r="8" fill="#3a76b8"/><path stroke="#fff" stroke-width="2" d="M8 6.500V13M8 3v2"/></svg>
    </div>
    <button aria-label="Close message bar" class="mt-1 grid w-[17px] place-items-center pl-[2px]"><svg class="size-[7px]" viewBox="0 0 8 8"><path stroke="#111" stroke-width="1.800" d="M1 1l6 6M7 1L1 7"/></svg></button>
  </div>

  <main class="flex min-h-0 flex-1">
    <!-- Colorize panel -->
    <aside class="relative mr-[5px] flex w-[223px] shrink-0 flex-col bg-white pt-px text-[#222]">
      <div class="flex h-[17px] items-center bg-linear-to-b from-[#bcd0e4] to-[#dbe7f3] pl-[5px]">
        <h2 class="flex-1">Colorize</h2>
        <button aria-label="Pin panel" class="mr-2"><svg class="size-2" viewBox="0 0 8 8"><path stroke="#111" d="M2 .5h4M2.500 0v4.500M5 0v4.500M1 4.500h6M4 5v3"/></svg></button>
        <button aria-label="Close panel" class="mr-[3px] grid size-[13px] place-items-center bg-[#c75050]"><svg class="size-[5px]" viewBox="0 0 6 6"><path stroke="#fff" stroke-width="1.500" d="M1 1l4 4M5 1L1 5"/></svg></button>
      </div>
      <div class="flex h-[26px] items-center gap-1 border-r border-[#ddd] pt-[2px] pl-[5px] text-[#3c5a82] [&_svg]:size-[14px]">
        <button aria-label="Expand all"><svg viewBox="0 0 14 14"><path stroke="#2f5c85" stroke-width="2.600" d="M7 2.500v9M2.500 7h9"/></svg></button>
        <button aria-label="Collapse all"><svg viewBox="0 0 14 14"><path stroke="#2f5c85" stroke-width="2.600" d="M2.500 7h9"/></svg></button>
        <button aria-label="Reset"><svg><use href="#rotate"/></svg></button>
        <button aria-label="Clear"><svg viewBox="0 0 16 16"><circle cx="8" cy="8" r="7" stroke="currentColor" stroke-width="1.100"/><path stroke="#e0542f" stroke-width="1.800" d="M5 5l6 6M11 5l-6 6"/></svg></button>
      </div>
      <table class="w-full table-fixed border-separate border-spacing-0 text-left [&_td]:h-[13px] [&_td]:border-b [&_td]:border-[#f0f0f0] [&_td]:p-0 [&_td]:leading-3 [&_input]:block [&_input]:size-[10px] [&_input]:appearance-none [&_input]:border [&_input]:border-[#808080] [&_input]:bg-[#f3f3f3] [&_label]:block [&_label]:border-l-[15px] [&_label]:border-[#f0f0f0] [&_label]:pl-[2px]">
        <thead class="bg-[#f2f2f2]">
          <tr>
            <th class="h-[14px] w-[113px] border-r border-b border-[#a0a0a0] p-0 pl-[5px] leading-3 font-normal">Property</th>
            <th class="h-[14px] border-b border-[#a0a0a0] p-0 pl-[3px] leading-3 font-normal">Value</th>
          </tr>
        </thead>
        <tbody>
          <tr>
            <td colspan="2" class="bg-[#f0f0f0]">
              <button class="flex h-[13px] items-center gap-[5px] pl-[5px] font-medium text-[#666]"><svg class="size-[7px]" viewBox="0 0 7 7"><path fill="#fff" stroke="#333" d="M.5.5h6v6h-6zM2 3.500h3"/></svg>Colorize type</button>
            </td>
          </tr>
          <tr><td class="border-r"><label for="c-opening">Opening</label></td><td><input id="c-opening" type="checkbox" class="ml-[2px]"></td></tr>
          <tr><td class="border-r"><label for="c-slab">Slab Region</label></td><td><input id="c-slab" type="checkbox" class="ml-[2px]"></td></tr>
          <tr><td class="border-r"><label for="c-beam">Beam</label></td><td><input id="c-beam" type="checkbox" class="ml-[2px]"></td></tr>
          <tr><td class="border-r"><label for="c-column">Column</label></td><td><input id="c-column" type="checkbox" class="ml-[2px]"></td></tr>
          <tr><td class="border-r"><label for="c-wall">Wall</label></td><td><input id="c-wall" type="checkbox" class="ml-[2px]"></td></tr>
        </tbody>
      </table>
      <div class="flex flex-1 border-b border-[#555]"><div class="w-[113px] border-r border-[#f0f0f0]"></div><div class="flex-1 border-r border-[#ddd]"></div></div>
      <div class="flex h-4 bg-[#f7f7f7]">
        <button class="border-r border-[#ddd] bg-[#f0f0f0] pr-1 pl-[6px]">Properties</button>
        <button class="border-r border-b border-[#ddd] bg-white px-1">Colorize</button>
      </div>
      <!-- Highlight frame around the panel -->
      <div class="pointer-events-none absolute -top-[6px] -right-[23px] -bottom-[9px] left-px z-10 rounded-[14px] border-[5px] border-[#ed1c24]"></div>
    </aside>

    <!-- Model viewport -->
    <div class="relative flex-1 border-t border-l border-[#888]">
      <div class="h-full border-y-2 border-r border-l-2 border-black bg-white">
        <svg class="size-full" viewBox="231 139 1198 643" preserveAspectRatio="xMinYMin meet" role="img" aria-label="Level 1 plan">
          <!-- walls -->
          <g stroke="#ffb8a4">
            <path d="M445 694.500h769M666.500 694v10M892.500 694v10M1117.500 694v10"/>
            <path d="M408.500 528.500h97v7h-97zM1283 528.500h-133.500v7H1283"/>
            <path d="M856.500 398.500h103v67h-103zM859.500 428.500h97v7h-97z"/>
          </g>
          <path stroke="#c2663a" d="M862.500 398.500h90v30h-90zM862.500 435.500h90v30h-90z"/>
          <!-- columns below -->
          <g stroke="#2f6638">
            <path d="M501.500 156.500h9v16h-9zM500.500 323.500h10v16h-10zM694.500 156.500h9v16h-9z"/>
            <path d="M690.500 326.500h16v10h-16zM690.500 527.500h16v10h-16z"/>
            <path d="M435.500 690.500h10v17h-10zM661.500 690.500h9v17h-9z"/>
          </g>
          <path stroke="#0c3a14" d="M510.500 157v16M510.500 323v17M500.500 325v15"/>
          <!-- columns above -->
          <g stroke="#ffff1f">
            <path d="M694.500 159.500h8v10h-8zM694.500 326.500h9v10h-9zM694.500 527.500h9v10h-9zM702.500 327v9M702.500 528v9M702.500 160v9"/>
            <path d="M818.500 229v5.500h17V229M979.500 229v5.500h17V229"/>
            <path d="M1112.500 157.500h10v15h-10zM1283 172.500h-9.500v-15H1283M1112.500 323.500h10v16h-10zM1283 339.500h-9.500v-17H1283"/>
            <path d="M662 694.500h9.500v10M670.500 694v10M887.500 690.500h9v14h-9zM888.500 691v13M895.500 691v13M1112.500 690.500h10v14h-10z"/>
          </g>
          <!-- slab outlines -->
          <path fill="#a9c7a9" d="M694 156h69v4h-69z"/>
          <g stroke="#4b874a" stroke-width="2.300">
            <path d="M500.800 156H762.500V228H1053V156H1283.200V535.800H1214V704.500H441V323H500.800z"/>
            <path d="M762.500 159.500H694V537.300H661V704.500"/>
            <path d="M441 528.800H376.300V766.300H1181.800V704.500"/>
          </g>
          <!-- axis marker -->
          <path stroke="#7fae80" d="M269.500 706l16 16.500h-8v24h24v-8l15.500 16.500-15.500 16.500v-9h-24v8.500h-16v-8.500h-8v-16h8v-24h-8z"/>
          <g fill="#5f9a61" text-anchor="middle" class="font-['Open_Sans',sans-serif] text-[18px] font-light">
            <text x="269" y="731">Y</text>
            <text x="269" y="762">W</text>
            <text transform="translate(300 755) rotate(90)" y="6">X</text>
          </g>
        </svg>
      </div>
      <!-- Callout -->
      <svg class="absolute top-[102px] left-[13px] z-10 h-[52px] w-[50px]" viewBox="0 0 50 52" aria-hidden="true"><path stroke="#ed1c24" stroke-width="5.500" stroke-linecap="round" d="M3 46L46 5"/></svg>
      <p class="absolute top-[73px] left-[66px] font-['Liberation_Sans',Arial,sans-serif] text-[24px] leading-7 text-[#ed1c24]">COLORIZE<br>WINDOW</p>
    </div>
  </main>

  <!-- Status bar -->
  <footer class="flex h-5 shrink-0 items-center bg-[#f0f0f0] pt-px text-[#3c5a82]">
    <a href="https://www.risa.com" class="flex-1 pl-[2px] text-[#3b82d0] underline">www.risa.com</a>
    <div class="flex items-center [&>button]:grid [&>button]:h-4 [&>button]:w-4 [&>button]:place-items-center [&>button>svg]:size-[13px] [&>i]:mx-[2px] [&>i]:h-[10px] [&>i]:w-px [&>i]:bg-[#cfcfcf]">
      <button class="bg-[#d5e3f3] outline -outline-offset-1 outline-[#b5cbe6]" aria-label="End point"><svg><use href="#line"/></svg></button>
      <button aria-label="Mid point"><svg><use href="#segment"/></svg></button>
      <button aria-label="Center"><svg><use href="#target"/></svg></button>
      <button aria-label="Intersection"><svg><use href="#cross"/></svg></button>
      <button aria-label="Perpendicular"><svg><use href="#perp"/></svg></button>
      <button aria-label="Nearest"><svg><use href="#near"/></svg></button>
      <button aria-label="Grid snap"><svg><use href="#grid-snap"/></svg></button>
      <button aria-label="Face snap"><svg><use href="#snap-face"/></svg></button>
      <button aria-label="Ortho mode"><svg><use href="#ortho"/></svg></button>
      <button aria-label="Hatch snap"><svg><use href="#hatch"/></svg></button>
      <button aria-label="Grid"><svg><use href="#grid"/></svg></button>
      <i></i>
      <button class="bg-[#d5e3f3] outline -outline-offset-1 outline-[#b5cbe6]" aria-label="Top"><svg><use href="#cube-top"/></svg></button>
      <button aria-label="Front"><svg><use href="#cube-front"/></svg></button>
      <button aria-label="Isometric"><svg><use href="#iso"/></svg></button>
      <button aria-label="Extents"><svg><use href="#zoom-ext"/></svg></button>
      <i></i>
      <button aria-label="Draw polyline"><svg><use href="#polyline"/></svg></button>
      <svg class="mr-1 h-1 w-[6px]"><use href="#caret"/></svg>
      <i></i>
      <button aria-label="Select type"><svg><use href="#sel-type"/></svg></button>
      <svg class="mr-1 h-1 w-[6px]"><use href="#caret"/></svg>
      <button aria-label="Refresh"><svg><use href="#rotate"/></svg></button>
      <button aria-label="View options"><svg><use href="#glasses"/></svg></button>
      <button aria-label="View selected"><svg><use href="#glasses-on"/></svg></button>
      <button aria-label="Render"><svg><use href="#teapot"/></svg></button>
      <button aria-label="Layer list"><svg><use href="#layers"/></svg></button>
      <button aria-label="Properties sheet"><svg><use href="#sheet"/></svg></button>
      <i></i>
    </div>
    <span class="w-[81px] border-r border-[#ccc] pl-[6px] whitespace-nowrap text-[#888]">-10.51, 104.07, 12...</span>
    <span class="w-[57px] border-r border-[#ccc] pl-2 text-[#222]">Units: US</span>
    <span class="mr-[2px] w-[139px] border-r border-[#ccc] pl-2 text-[#222]">Level: Level 1 (EL 12.5)</span>
  </footer>
</body>
</html>
